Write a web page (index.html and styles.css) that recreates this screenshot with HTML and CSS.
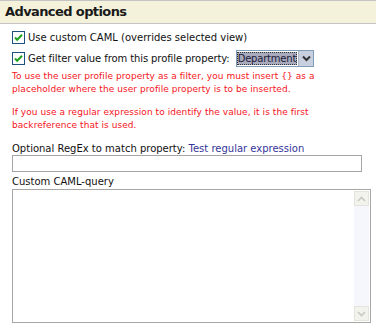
FILE: index.html
```html
<!DOCTYPE html>
<html lang="en">

<head>
    <meta charset="UTF-8">
    <title>Advanced options</title>
    <link rel="stylesheet" href="styles.css">
</head>

<body>
    <div class="panel">
        <h2 class="panel-title">Advanced options</h2>
        <div class="panel-body">
            <div class="check-row">
                <svg class="checkbox" width="13" height="13" viewBox="0 0 13 13">
                    <rect x="0.5" y="0.5" width="12" height="12" fill="#fff" stroke="#1c5180" />
                    <path d="M3 6.5 L5.2 8.8 L10 3.8" fill="none" stroke="#21a121" stroke-width="2" />
                </svg>
                <span>Use custom CAML (overrides selected view)</span>
            </div>
            <div class="check-row">
                <svg class="checkbox" width="13" height="13" viewBox="0 0 13 13">
                    <rect x="0.5" y="0.5" width="12" height="12" fill="#fff" stroke="#1c5180" />
                    <path d="M3 6.5 L5.2 8.8 L10 3.8" fill="none" stroke="#21a121" stroke-width="2" />
                </svg>
                <span class="tight">Get filter value from this profile property:</span>
                <span class="select">
                    <span class="select-value">Department</span>
                    <span class="select-arrow">
                        <svg width="9" height="7" viewBox="0 0 9 7">
                            <path d="M1 1.5 L4.5 5 L8 1.5" fill="none" stroke="#333" stroke-width="2" />
                        </svg>
                    </span>
                </span>
            </div>
            <p class="note">To use the user profile property as a filter, you must insert {} as a placeholder where the user profile property is to be inserted.</p>
            <p class="note">If you use a regular expression to identify the value, it is the first backreference that is used.</p>
            <div class="field-label">Optional RegEx to match property: <a href="#" class="link">Test regular expression</a></div>
            <div class="text-input"></div>
            <div class="field-label">Custom CAML-query</div>
            <div class="textarea">
                <div class="scrollbar">
                    <span class="scroll-btn">
                        <svg width="9" height="6" viewBox="0 0 9 6"><path d="M1 5 L4.5 1.5 L8 5" fill="none" stroke="#c9c9c0" stroke-width="1.6" /></svg>
                    </span>
                    <span class="scroll-track"></span>
                    <span class="scroll-btn">
                        <svg width="9" height="6" viewBox="0 0 9 6"><path d="M1 1 L4.5 4.5 L8 1" fill="none" stroke="#c9c9c0" stroke-width="1.6" /></svg>
                    </span>
                </div>
            </div>
        </div>
    </div>
</body>

</html>
```

FILE: styles.css
```css
body {
    margin: 0;
    background-color: #fff;
    font-family: "DejaVu Sans", Verdana, sans-serif;
    font-size: 10px;
    color: #111;
}

.panel-title {
    margin: 0;
    height: 22px;
    padding-left: 5px;
    background-color: #f5f2dc;
    border-top: 1px solid #c4c4c4;
    border-bottom: 1px solid #c4c4c4;
    font-size: 13px;
    font-weight: bold;
    letter-spacing: -0.6px;
    line-height: 22px;
    color: #1a1a1a;
}

.panel-body {
    padding: 4px 6px 0 12px;
}

.check-row {
    display: flex;
    align-items: center;
    gap: 2px;
    height: 19px;
    margin-bottom: 2px;
}

.checkbox {
    flex: none;
    margin-right: 1px;
}

.tight {
    letter-spacing: -0.1px;
}

.select {
    display: flex;
    margin-left: 4px;
    height: 15px;
    border: 1px solid #7f9db9;
    background: #fff;
}

.select-value {
    background: #a9aabc;
    outline: 1px dotted #333;
    outline-offset: -1px;
    padding: 0 1px;
    margin: 1px 1px 1px 0;
    font-size: 10px;
    letter-spacing: -0.2px;
    line-height: 13px;
    color: #1a1a3a;
}

.select-arrow {
    display: flex;
    align-items: center;
    justify-content: center;
    width: 14px;
    background: #c8cfdf;
    border-left: 1px solid #b0b8c8;
}

.note {
    margin: 1px 0 10px;
    color: #f5141c;
    font-size: 9px;
    letter-spacing: 0.06px;
    line-height: 13px;
}

.field-label {
    line-height: 13px;
}

.link {
    color: #35359a;
    text-decoration: none;
}

.text-input {
    width: 348px;
    height: 15px;
    border: 1px solid #a6a6a6;
    margin-bottom: 3px;
}

.textarea {
    display: flex;
    justify-content: flex-end;
    width: 357px;
    height: 132px;
    border: 1px solid #a6a6a6;
    margin-top: 1px;
}

.scrollbar {
    display: flex;
    flex-direction: column;
    width: 15px;
    padding: 1px 1px 1px 0;
}

.scroll-btn {
    display: flex;
    align-items: center;
    justify-content: center;
    height: 15px;
    background: #f3f3ee;
    border: 1px solid #e4e4dc;
    box-sizing: border-box;
}

.scroll-track {
    flex: 1;
    background: #f6f7fc;
}
```
